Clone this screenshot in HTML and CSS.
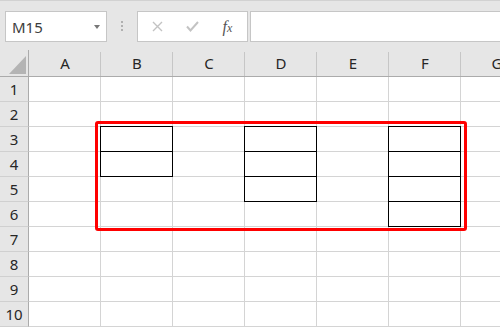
FILE: index.html
```html
<!DOCTYPE html>
<html>
<head>
<meta charset="UTF-8">
<title>Book1 - Excel</title>
<link rel="stylesheet" href="styles.css">
</head>
<body>
<div class="toolbar">
<div class="namebox"><span>M15</span><span class="drop"></span></div>
<div class="grip"><i></i><i></i><i></i></div>
<div class="fbtns">
<span class="fbtn"><svg width="11" height="11" viewBox="0 0 11 11"><path d="M1 1L10 10M10 1L1 10" stroke="#c3c3c3" stroke-width="1.4" fill="none"/></svg></span>
<span class="fbtn"><svg width="13" height="11" viewBox="0 0 13 11"><path d="M1 5.5L4.5 9.5L12 1" stroke="#c3c3c3" stroke-width="2" fill="none"/></svg></span>
<span class="fbtn"><span class="fx">f<small>x</small></span></span>
</div>
<div class="formula"></div>
</div>
<div class="sheet">
<div id="cells" class="cells"></div>
<div class="marks">
<div class="frame box-b"><div></div><div></div></div>
<div class="frame box-d"><div></div><div></div><div></div></div>
<div class="frame box-f"><div></div><div></div><div></div><div></div></div>
<div class="range"></div>
</div>
</div>
<script>
var cells = document.getElementById('cells');
var cols = ['A', 'B', 'C', 'D', 'E', 'F', 'G'];
var html = '<div class="corner"><div class="tri"></div></div>';
for (var c = 0; c < cols.length; c++) {
	html += '<div class="colhead">' + cols[c] + '</div>';
}
for (var r = 1; r <= 10; r++) {
	html += '<div class="rowhead">' + r + '</div>';
	for (var c = 0; c < cols.length; c++) {
		html += '<div class="cell"></div>';
	}
}
cells.innerHTML = html;
</script>
</body>
</html>
```
FILE: styles.css
```css
body {
	margin: 0;
	background: #e6e6e6;
	font-family: "Noto Sans", "Liberation Sans", sans-serif;
	overflow: hidden;
}
.toolbar {
	display: flex;
	align-items: flex-start;
	height: 50px;
	padding: 10px 0 0 5px;
	box-sizing: border-box;
	border-top: 1px solid #d2d2d2;
}
.namebox {
	display: flex;
	align-items: center;
	justify-content: space-between;
	width: 102px;
	height: 31px;
	box-sizing: border-box;
	padding: 0 6px 0 6px;
	background: #fff;
	border: 1px solid #c6c6c6;
	font-size: 15px;
	color: #3c3c3c;
}
.drop {
	width: 0;
	height: 0;
	border-left: 3.5px solid transparent;
	border-right: 3.5px solid transparent;
	border-top: 4px solid #777;
	margin-top: 1px;
}
.grip {
	display: flex;
	flex-direction: column;
	align-items: center;
	gap: 2px;
	width: 30px;
	padding-top: 10px;
}
.grip i {
	width: 2px;
	height: 2px;
	background: #b0b0b0;
}
.fbtns {
	display: flex;
	align-items: center;
	width: 111px;
	height: 31px;
	box-sizing: border-box;
	padding-left: 2px;
	background: #fff;
	border: 1px solid #c6c6c6;
}
.fbtn {
	display: flex;
	align-items: center;
	justify-content: center;
	width: 35px;
	height: 29px;
}
.fx {
	font-family: "Liberation Serif", serif;
	font-style: italic;
	font-size: 16px;
	color: #555;
}
.fx small {
	font-size: 12px;
}
.formula {
	flex: 1;
	height: 31px;
	box-sizing: border-box;
	margin-left: 2px;
	background: #fff;
	border: 1px solid #c6c6c6;
	border-right: none;
}
.sheet {
	display: grid;
	overflow: hidden;
}
.cells, .marks {
	grid-area: 1 / 1;
	display: grid;
	grid-template-columns: 29px repeat(7, 72px);
	grid-template-rows: 27px repeat(10, 25px);
}
.marks {
	pointer-events: none;
}
.corner {
	display: flex;
	align-items: flex-end;
	justify-content: flex-end;
	padding: 0 2px 2px 0;
	background: #e6e6e6;
	border-right: 1px solid #ababab;
	border-bottom: 1px solid #ababab;
}
.tri {
	width: 17px;
	height: 18px;
	background: #b4b4b4;
	clip-path: polygon(100% 0, 100% 100%, 0 100%);
}
.colhead {
	display: flex;
	align-items: center;
	justify-content: center;
	background: #e6e6e6 linear-gradient(#c6c6c6, #c6c6c6) right bottom / 1px 24px no-repeat;
	border-bottom: 1px solid #ababab;
	font-size: 15px;
	color: #262626;
}
.rowhead {
	display: flex;
	align-items: center;
	justify-content: center;
	background: #e6e6e6;
	border-right: 1px solid #ababab;
	border-bottom: 1px solid #d0d0d0;
	font-size: 15px;
	color: #262626;
}
.cell {
	background: #fff;
	border-right: 1px solid #d4d4d4;
	border-bottom: 1px solid #d4d4d4;
}
.frame {
	display: flex;
	flex-direction: column;
	margin: -1px 0 0 -1px;
	border: 1px solid #000;
}
.frame div {
	flex: 1;
}
.frame div + div {
	border-top: 1px solid #000;
}
.box-b {
	grid-column: 3;
	grid-row: 4 / 6;
}
.box-d {
	grid-column: 5;
	grid-row: 4 / 7;
}
.box-f {
	grid-column: 7;
	grid-row: 4 / 8;
}
.range {
	grid-column: 3 / 8;
	grid-row: 4 / 8;
	margin: -6px -6px -4px -6px;
	border: 3px solid #ff0000;
	border-radius: 3px;
}
```
